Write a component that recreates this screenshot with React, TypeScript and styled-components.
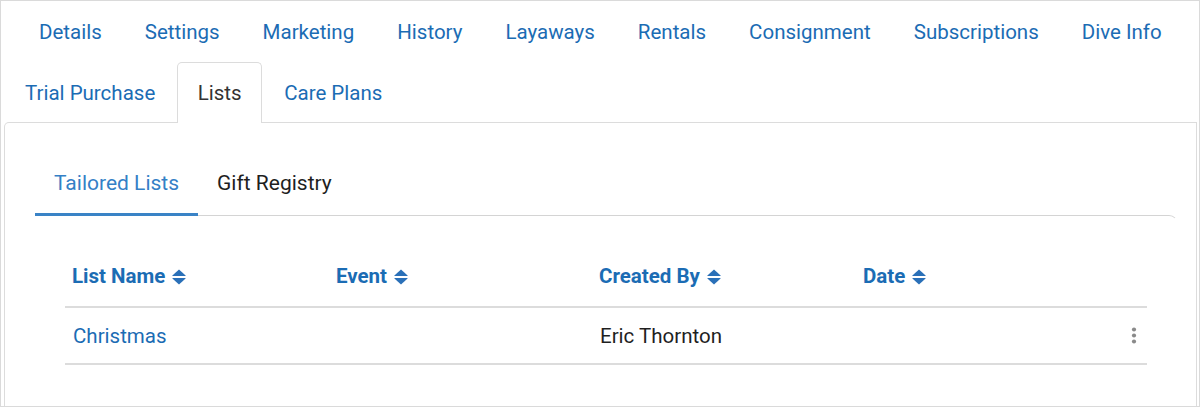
import React from "react";
import styled, { createGlobalStyle } from "styled-components";

const GlobalStyle = createGlobalStyle`
  html, body { margin: 0; padding: 0; background: #ffffff; }
  body { font-family: Roboto, "Liberation Sans", Arial, sans-serif; }
  * { box-sizing: border-box; }
`;

const BLUE = "#1b6cb4";

const Frame = styled.div`
  width: 1200px;
  height: 407px;
  border: 1px solid #dadada;
  padding: 0 2px 0 2px;
  display: flex;
  flex-direction: column;
  overflow: hidden;
  background: #fff;
`;

const TabRow = styled.div<{ $indent?: number; $h: number }>`
  display: flex;
  align-items: stretch;
  height: ${(p) => p.$h}px;
  padding-left: ${(p) => p.$indent ?? 0}px;
  position: relative;
  z-index: 1;
`;

const Tab = styled.div<{ $active?: boolean; $pad: number }>`
  padding: 0 ${(p) => (p.$active ? p.$pad - 1.5 : p.$pad)}px;
  display: flex;
  align-items: center;
  font-size: 20.5px;
  color: ${(p) => (p.$active ? "#333333" : BLUE)};
  background: #fff;
  border: 1px solid ${(p) => (p.$active ? "#dcdcdc" : "transparent")};
  border-bottom: none;
  border-radius: 5px 5px 0 0;
  margin-bottom: ${(p) => (p.$active ? "-1px" : "0")};
  cursor: pointer;
  white-space: nowrap;
`;

const Panel = styled.div`
  flex: 1;
  margin-left: 1px;
  border: 1px solid #dcdcdc;
  border-bottom: none;
  border-radius: 5px 0 0 0;
  padding: 30px 18px 0 30px;
  background: #fff;
`;

const SubTabs = styled.div`
  display: flex;
  position: relative;
  z-index: 1;
`;

const SubTab = styled.div<{ $active?: boolean }>`
  height: 63px;
  padding: 0 19px;
  display: flex;
  align-items: center;
  font-size: 21px;
  color: ${(p) => (p.$active ? "#3480c6" : "#1f1f1f")};
  border-bottom: 3px solid ${(p) => (p.$active ? "#3a83c6" : "transparent")};
  margin-bottom: -1px;
  cursor: pointer;
`;

const Card = styled.div`
  border-top: 1px solid #d4d4d4;
  border-right: 1px solid transparent;
  border-top-right-radius: 9px;
  padding: 30px 30px 0 30px;
`;

const Table = styled.table`
  width: 100%;
  border-collapse: collapse;
  table-layout: fixed;
`;

const Th = styled.th<{ $w?: number }>`
  width: ${(p) => (p.$w ? `${p.$w}px` : "auto")};
  height: 61px;
  padding: 0 7px;
  text-align: left;
  font-size: 20.5px;
  font-weight: 700;
  color: ${BLUE};
  border-bottom: 2px solid #dcdcdc;
  white-space: nowrap;
`;

const SortWrap = styled.span`
  display: inline-block;
  margin-left: 7px;
  vertical-align: -2px;
  line-height: 0;
`;

const SortIcon = () => (
  <SortWrap>
    <svg width="14" height="16" viewBox="0 0 14 16">
      <path d="M7 0.6 L13.6 6.6 Q14 7 13.4 7 L0.6 7 Q0 7 0.4 6.6 Z" fill="#2a70b8" />
      <path d="M7 15.4 L13.6 9.4 Q14 9 13.4 9 L0.6 9 Q0 9 0.4 9.4 Z" fill="#2a70b8" />
    </svg>
  </SortWrap>
);

const Td = styled.td<{ $link?: boolean; $center?: boolean }>`
  height: 57px;
  padding: 0 8px;
  font-size: 20.5px;
  color: ${(p) => (p.$link ? BLUE : "#1f1f1f")};
  border-bottom: 2px solid #dcdcdc;
  text-align: ${(p) => (p.$center ? "center" : "left")};
  white-space: nowrap;
`;

const KebabSvg = styled.svg`
  display: block;
  margin: 0 auto;
`;

const Kebab = () => (
  <KebabSvg width="6" height="17" viewBox="0 0 6 17">
    <circle cx="3" cy="2.5" r="2.1" fill="#8a8a8a" />
    <circle cx="3" cy="8.5" r="2.1" fill="#8a8a8a" />
    <circle cx="3" cy="14.5" r="2.1" fill="#8a8a8a" />
  </KebabSvg>
);

const row1 = ["Details", "Settings", "Marketing", "History", "Layaways", "Rentals", "Consignment", "Subscriptions", "Dive Info"];
const row2 = ["Trial Purchase", "Lists", "Care Plans"];

export default function App() {
  return (
    <>
      <GlobalStyle />
      <Frame>
        <TabRow $indent={14.5} $h={61}>
          {row1.map((t) => (
            <Tab key={t} $pad={20.5}>{t}</Tab>
          ))}
        </TabRow>
        <TabRow $h={60}>
          {row2.map((t) => (
            <Tab key={t} $pad={21} $active={t === "Lists"}>
              {t}
            </Tab>
          ))}
        </TabRow>
        <Panel>
          <SubTabs>
            <SubTab $active>Tailored Lists</SubTab>
            <SubTab>Gift Registry</SubTab>
          </SubTabs>
          <Card>
            <Table>
              <thead>
                <tr>
                  <Th $w={264}>List Name<SortIcon /></Th>
                  <Th $w={263}>Event<SortIcon /></Th>
                  <Th $w={264}>Created By<SortIcon /></Th>
                  <Th $w={264}>Date<SortIcon /></Th>
                  <Th />
                </tr>
              </thead>
              <tbody>
                <tr>
                  <Td $link>Christmas</Td>
                  <Td></Td>
                  <Td>Eric Thornton</Td>
                  <Td></Td>
                  <Td $center><Kebab /></Td>
                </tr>
              </tbody>
            </Table>
          </Card>
        </Panel>
      </Frame>
    </>
  );
}
